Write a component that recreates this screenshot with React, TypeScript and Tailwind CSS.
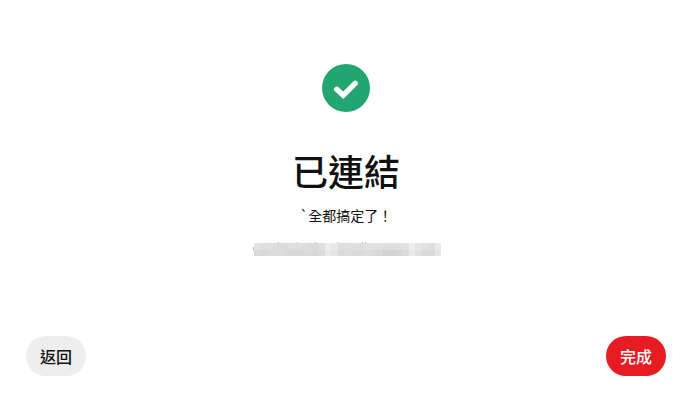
import React from "react";

const topRow = ["#e2e2e2", "#dedede", "#dfdfdf", "#dcdcdc", "#dcdcdc", "#dedede", "#dddddd", "#dedede", "#dbdbdb", "#dadada", "#dfdfdf", "#eeeeee", "#e8e8e8", "#dddddd", "#dddddd", "#e0e0e0", "#dedede", "#e2e2e2", "#e2e2e2", "#e1e1e1", "#dfdfdf", "#dfdfdf", "#e0e0e0", "#e2e2e2", "#ededed", "#e6e6e6", "#e2e2e2", "#dedede", "#eaeaea"];
const bottomRow = ["#dadada", "#d8d8d8", "#dcdcdc", "#dbdbdb", "#dcdcdc", "#d9d9d9", "#d8d8d8", "#d8d8d8", "#dadada", "#d7d7d7", "#dcdcdc", "#e8e8e8", "#e4e4e4", "#dadada", "#dcdcdc", "#d8d8d8", "#dadada", "#dcdcdc", "#d9d9d9", "#d8d8d8", "#d2d2d2", "#d2d2d2", "#d5d5d5", "#dadada", "#e8e8e8", "#e0e0e0", "#dadada", "#dadada", "#e6e6e6"];
const specks = [25, 44, 62, 84, 109, 112];

function RedactedAccount() {
  return (
    <svg className="mt-[15px] h-4 w-[190px]" viewBox="-2 0 190 16" shapeRendering="crispEdges" aria-hidden="true">
      {topRow.map((c, i) => (
        <rect key={i} x={1 + i * 6.45} y="2" width="6.5" height="7" fill={c} />
      ))}
      {bottomRow.map((c, i) => (
        <rect key={i} x={1 + i * 6.45} y="9" width="6.5" height="6" fill={c} />
      ))}
      {specks.map((x) => (
        <rect key={x} x={x} y="1" width="1" height="1" fill="#b5b5b5" />
      ))}
      <rect x="0" y="6" width="1" height="4" fill="#c4c4c4" />
    </svg>
  );
}

export default function App() {
  return (
    <main
      lang="zh-Hant"
      className="flex min-h-screen flex-col bg-white pr-7 pl-[26px] text-[#111111] font-['Noto_Sans_CJK_TC',sans-serif]"
    >
      <section className="flex grow flex-col items-center pt-16">
        <svg className="size-12" viewBox="0 0 48 48" fill="none" role="img" aria-label="完成">
          <circle cx="24" cy="24" r="24" fill="#22a571" />
          <path d="M14.7 25.3 21.2 31.3 33.2 19.3" stroke="#ffffff" strokeWidth="5.4" strokeLinecap="round" />
        </svg>
        <h1 className="mt-8 text-4xl leading-[52px] font-medium">已連結</h1>
        <p className="mt-2 text-sm leading-[22px]">`全都搞定了！</p>
        <RedactedAccount />
      </section>
      <footer className="flex justify-between pb-[29px]">
        <button type="button" className="h-10 rounded-full bg-[#eeeeee] px-3.5 text-base font-medium">
          返回
        </button>
        <button type="button" className="h-10 rounded-full bg-[#e71b22] px-3.5 text-base font-medium text-white">
          完成
        </button>
      </footer>
    </main>
  );
}
